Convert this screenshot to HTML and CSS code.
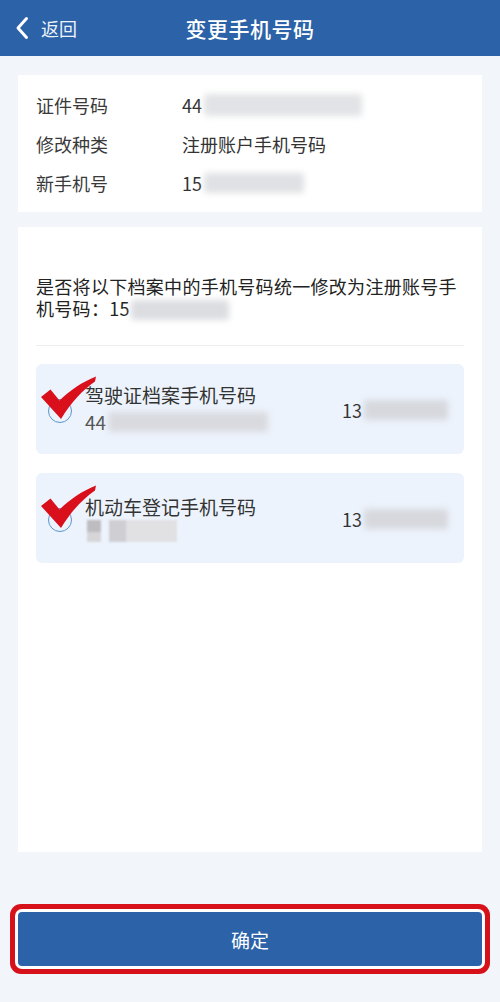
FILE: index.html
```html
<!DOCTYPE html>
<html lang="zh-CN">
<head>
<meta charset="utf-8">
<title>变更手机号码</title>
<link rel="stylesheet" href="styles.css">
</head>
<body>
<div class="page">
  <header class="topbar">
    <div class="back">
      <svg class="chev" width="14" height="24" viewBox="0 0 14 24"><path d="M11.5 2.5 L3 12 L11.5 21.5" fill="none" stroke="#fff" stroke-width="3" stroke-linecap="round" stroke-linejoin="round"/></svg>
      <span>返回</span>
    </div>
    <div class="title">变更手机号码</div>
    <div></div>
  </header>

  <main class="main">
    <section class="card info">
      <div class="row"><span class="label">证件号码</span><span class="val">44<span class="blur b-id"></span></span></div>
      <div class="row"><span class="label">修改种类</span><span class="val">注册账户手机号码</span></div>
      <div class="row"><span class="label">新手机号</span><span class="val">15<span class="blur b-phone"></span></span></div>
    </section>

    <section class="card list">
      <p class="question">是否将以下档案中的手机号码统一修改为注册账号手机号码：15<span class="blur b-q"></span></p>
      <div class="divider"></div>
      <div class="items">
        <div class="item">
          <span class="circle"></span>
          <div class="item-text">
            <div class="item-title">驾驶证档案手机号码</div>
            <div class="item-sub">44<span class="blur b-sub"></span></div>
          </div>
          <div class="item-phone">13<span class="blur b-right"></span></div>
          <svg class="tick" width="62" height="56" viewBox="0 0 62 56"><path d="M3 30 L12.5 22.5 L21.5 33.5 C32 23.5 44 15 58 9.5 L57 14.5 C45 23 34 34 23 52 Z" fill="#d9101c"/></svg>
        </div>
        <div class="item">
          <span class="circle"></span>
          <div class="item-text">
            <div class="item-title">机动车登记手机号码</div>
            <div class="item-sub"><span class="mosaic m1"></span><span class="mosaic m2"></span></div>
          </div>
          <div class="item-phone">13<span class="blur b-right"></span></div>
          <svg class="tick" width="62" height="56" viewBox="0 0 62 56"><path d="M3 30 L12.5 22.5 L21.5 33.5 C32 23.5 44 15 58 9.5 L57 14.5 C45 23 34 34 23 52 Z" fill="#d9101c"/></svg>
        </div>
      </div>
    </section>

    <div class="footer">
      <button class="confirm">确定</button>
    </div>
  </main>
</div>
</body>
</html>
```

FILE: styles.css
```css
* { box-sizing: border-box; }
html, body { margin: 0; padding: 0; }
body {
  width: 500px;
  height: 1002px;
  background: #f2f5f9;
  font-family: "Noto Sans CJK SC", "Noto Sans", sans-serif;
  color: #333;
  overflow: hidden;
}
.page { display: flex; flex-direction: column; height: 1002px; }

.topbar {
  height: 56px;
  background: #2b62a8;
  color: #fff;
  display: grid;
  grid-template-columns: 1fr auto 1fr;
  align-items: center;
}
.back {
  display: flex;
  align-items: center;
  gap: 12px;
  padding-left: 15px;
  font-size: 18px;
  color: #eef3fa;
}
.chev { display: block; }
.title { font-size: 21px; font-weight: 500; letter-spacing: 0.5px; }

.main {
  padding: 19px 18px 0;
  display: flex;
  flex-direction: column;
}
.card { background: #fff; }

.info { padding: 10px 18px; }
.row {
  height: 39px;
  display: flex;
  align-items: center;
  font-size: 18px;
}
.label { width: 146px; color: #3a3a3a; }
.val { display: flex; align-items: center; color: #333; }

.blur {
  display: inline-block;
  background: #dcdde1;
  filter: blur(3px);
  border-radius: 3px;
}
.b-id { width: 158px; height: 22px; margin-left: 2px; background: #e2e3e6; }
.b-phone { width: 100px; height: 20px; margin-left: 2px; background: #e0e1e4; }
.b-q { width: 98px; height: 20px; margin-left: 1px; vertical-align: -4px; }
.b-sub { width: 160px; height: 20px; margin-left: 2px; background: #d9dadf; }
.b-right { width: 88px; height: 20px; margin-left: 2px; background: #d6d8dd; }

.list {
  margin-top: 15px;
  height: 625px;
  padding: 48px 18px 0;
}
.question {
  margin: 0;
  font-size: 18px;
  line-height: 22px;
  color: #222;
  letter-spacing: 0.3px;
}
.divider {
  height: 1px;
  background: #eceef1;
  margin-top: 25px;
}
.items {
  margin-top: 18px;
  display: flex;
  flex-direction: column;
  gap: 19px;
}
.item {
  position: relative;
  background: #edf3fc;
  border-radius: 6px;
  height: 90px;
  padding: 0 16px 0 12px;
  display: flex;
  align-items: center;
}
.circle {
  width: 24px;
  height: 24px;
  border: 1.5px solid #5b95cc;
  border-radius: 50%;
  margin-top: 4px;
  flex: none;
}
.item-text { margin-left: 13px; flex: 1; }
.item-title { font-size: 19px; line-height: 27px; color: #333; margin-top: -2px; }
.item-sub {
  font-size: 19px;
  line-height: 27px;
  color: #555;
  display: flex;
  align-items: center;
}
.item-phone {
  width: 106px;
  font-size: 18px;
  display: flex;
  align-items: center;
  color: #333;
  margin-top: 2px;
}
.tick { position: absolute; left: 2px; top: 3px; }

.mosaic { display: inline-block; height: 22px; filter: blur(1px); }
.m1 { width: 14px; margin-left: 2px; background: linear-gradient(#bdbdc1 0 55%, #d6d6d9 55% 100%); }
.m2 { width: 68px; margin-left: 8px; background: linear-gradient(90deg, #cfcfd3 0 25%, #e1e1e4 25% 100%); }

.footer { margin-top: 60px; }
.confirm {
  width: 100%;
  height: 54px;
  border: none;
  border-radius: 4px;
  background: #2b62a8;
  color: #fff;
  font-family: inherit;
  font-size: 19px;
  box-shadow: 0 0 0 3px #fff, 0 0 0 8px #d7111a;
  display: block;
}
```
